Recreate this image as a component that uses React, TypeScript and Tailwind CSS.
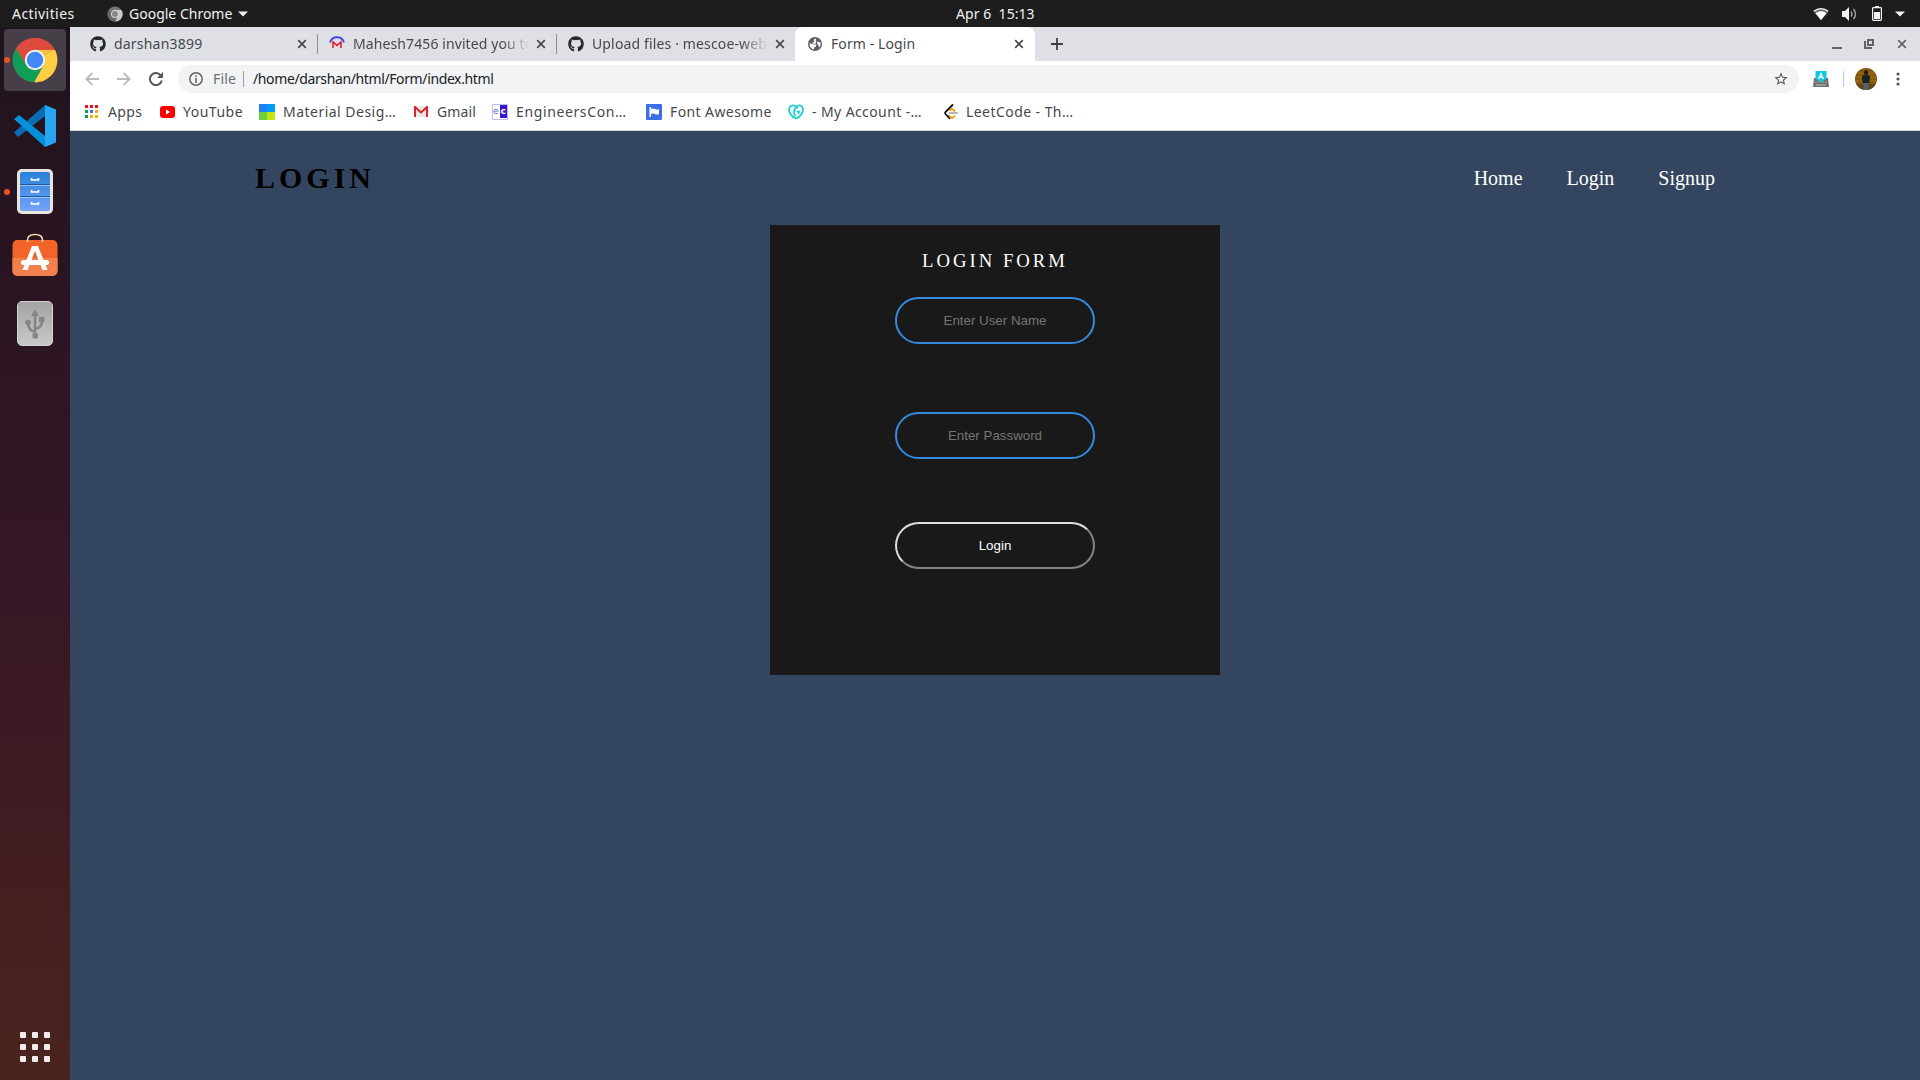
import React from "react";
import { FaGithub } from "react-icons/fa";

const SANS = "font-['Noto_Sans',sans-serif]";

function Label({ w, t, c = "" }: { w: string; t: string; c?: string }) {
  return <span className={`block shrink-0 whitespace-nowrap ${w} ${c}`}>{t}</span>;
}

function Caret() {
  return (
    <svg width="10" height="6" viewBox="0 0 10 6">
      <path d="M0 .5h10L5 5.5z" fill="#f2f2f2" />
    </svg>
  );
}

function TopBar() {
  return (
    <header className="flex h-[27px] shrink-0 items-center bg-[#1d1d1d] text-[14px] text-[#f2f2f2]">
      <div className="flex w-[956px] items-center pl-3">
        <Label w="w-[95px]" t="Activities" c="pb-px tracking-[0.43px]" />
        <svg width="16" height="16" viewBox="0 0 16 16" className="mr-[6px]">
          <circle cx="8" cy="8" r="7.500" fill="#777" />
          <path d="M8 4h6.500a7.500 7.500 0 0 1-6.500 11.500l3.500-6z" fill="#c9c9c9" />
          <path d="M1.500 4.200A7.500 7.500 0 0 0 8 15.500l3-6z" fill="#686868" />
          <circle cx="8" cy="8" r="4" fill="#d8d8d8" />
          <circle cx="8" cy="8" r="3" fill="#888" />
        </svg>
        <Label w="w-[109px]" t="Google Chrome" c="pb-px" />
        <Caret />
      </div>
      <Label w="w-[82px]" t="Apr 6  15:13" c="whitespace-pre pb-px tracking-[0.05px]" />
      <div className="flex flex-1 items-center justify-end pr-[15px]">
        <svg width="16" height="14" viewBox="0 0 16 14" className="mr-[13px]">
          <path d="M.5 4.5C5 .5 11 .5 15.500 4.500L8 13.500z" fill="#6d6d6d" />
          <path d="M.8 4.300C5 .6 11 .6 15.200 4.300" fill="none" stroke="#f4f4f4" strokeWidth="1.300" />
          <path d="M2.600 6.200C6 3.600 10 3.600 13.400 6.200L8 13z" fill="#fff" />
        </svg>
        <svg width="15" height="14" viewBox="0 0 15 14" className="mr-[15px]">
          <path d="M0 4h3l4-4v14l-4-4H0z" fill="#f2f2f2" />
          <path d="M9 4.500q2 2.500 0 5M11.500 2q4 5 0 10" fill="none" stroke="#aaa" strokeWidth="1.300" />
        </svg>
        <svg width="10" height="15" viewBox="0 0 10 15" className="mr-[13px]">
          <path d="M3 0h4v2H3z" fill="#f2f2f2" />
          <rect x=".6" y="1.600" width="8.800" height="12.800" rx=".8" fill="none" stroke="#f2f2f2" strokeWidth="1.200" />
          <path d="M2 6h6v7H2z" fill="#f2f2f2" />
        </svg>
        <Caret />
      </div>
    </header>
  );
}

function ChromeIcon() {
  return (
    <svg width="46" height="46" viewBox="0 0 46 46">
      <circle cx="23" cy="23" r="22.300" fill="#dd4b3e" />
      <path d="M23 13h20A22.300 22.300 0 0 1 22 45.300L31.700 28z" fill="#ffce43" />
      <path d="M4 11.500A22.300 22.300 0 0 0 22 45.300L31.700 28 14.300 28z" fill="#109d58" />
      <path d="M23 13h20l-11 6z" fill="#e8b83a" opacity=".6" />
      <circle cx="23" cy="23" r="10.200" fill="#f1f1f1" />
      <circle cx="23" cy="23" r="8.200" fill="#4387f4" />
    </svg>
  );
}

function CodeIcon() {
  return (
    <svg width="42" height="42" viewBox="0 0 42 42">
      <path d="M0 27.500L4 32l27-21V0z" fill="#0a6db3" />
      <path d="M0 14l5-4 26 21v11z" fill="#0590da" />
      <path d="M31 0l11 4.500v33L31 42z" fill="#27a5f2" />
    </svg>
  );
}

function FilesIcon() {
  return (
    <svg width="38" height="46" viewBox="0 0 38 46">
      <defs>
        <linearGradient id="drawer" x1="0" y1="0" x2="0" y2="1">
          <stop offset="0" stopColor="#2a81d8" />
          <stop offset="1" stopColor="#75a2fa" />
        </linearGradient>
      </defs>
      <rect x="1" y="0" width="36" height="45" rx="5" fill="#e9e5dc" />
      <rect x="4" y="3" width="30" height="39" rx="2" fill="url(#drawer)" />
      <path d="M4 15.500h30M4 27.500h30" stroke="#155ca5" />
      <path d="M4 16.500h30M4 28.500h30" stroke="#9cc4f5" />
      <path d="M15.500 9v2h7V9M15.500 21v2h7v-2M15.500 33v2h7v-2" fill="none" stroke="#fff" strokeWidth="1.600" />
    </svg>
  );
}

function SoftwareIcon() {
  return (
    <svg width="46" height="44" viewBox="0 0 46 44" className="mb-[6px]">
      <rect x=".5" y="7" width="45" height="36" rx="5" fill="#f26427" />
      <path d="M.5 25h45v13a5 5 0 0 1-5 5h-35a5 5 0 0 1-5-5z" fill="#f2804e" />
      <path d="M15.500 9V7q0-5.500 7.500-5.500T30.500 7v2" fill="none" stroke="#f6d6a8" strokeWidth="1.600" />
      <path d="M20 13h6l9.500 24h-5L23 18l-7.500 19h-5z" fill="#fff" />
      <rect x="9" y="27" width="28" height="5" rx="2.500" fill="#fff" />
    </svg>
  );
}

function UsbIcon() {
  return (
    <svg width="38" height="46" viewBox="0 0 38 46">
      <defs>
        <linearGradient id="metal" x1="0" y1="0" x2="0" y2="1">
          <stop offset="0" stopColor="#a3a3a3" />
          <stop offset="1" stopColor="#c9c9c9" />
        </linearGradient>
      </defs>
      <rect x="1.500" y=".5" width="35" height="44" rx="4.500" fill="url(#metal)" stroke="#d2d2d2" />
      <g fill="none" stroke="#858585" strokeWidth="2.500">
        <path d="M19 35V12M19 31q-7-2-7-9M19 28q7-1 7-8" />
      </g>
      <g fill="#858585">
        <path d="M15 15l4-7 4 7zM23 16h5.500v5H23z" />
        <circle cx="12" cy="21.500" r="2.800" />
        <rect x="16.500" y="32" width="5.500" height="5.500" rx="1.500" />
      </g>
    </svg>
  );
}

function DockItem({ children, active, dot }: { children: React.ReactNode; active?: boolean; dot?: boolean }) {
  return (
    <div className={`relative flex h-[62px] w-[62px] items-center justify-center rounded-[4px] ${active ? "bg-[#463f47]" : ""}`}>
      {dot && <i className="absolute top-[28px] left-0 h-[6px] w-[6px] rounded-full bg-[#e95420]" />}
      {children}
    </div>
  );
}

function Dock() {
  return (
    <aside className="flex w-[70px] shrink-0 flex-col items-center justify-between bg-linear-to-b from-[#1f131d] via-[#351626] to-[#4a231c] pt-[2px] pb-[18px]">
      <div className="flex flex-col items-center gap-[4px]">
        <DockItem active dot><ChromeIcon /></DockItem>
        <DockItem><CodeIcon /></DockItem>
        <DockItem dot><FilesIcon /></DockItem>
        <DockItem><SoftwareIcon /></DockItem>
        <DockItem><UsbIcon /></DockItem>
      </div>
      <div className="grid grid-cols-3 gap-[6px]">
        {Array.from({ length: 9 }, (_, i) => (
          <i key={i} className="h-[6px] w-[6px] rounded-[1px] bg-[#f0eeec]" />
        ))}
      </div>
    </aside>
  );
}

function Cross({ c = "#45494d" }: { c?: string }) {
  return (
    <svg width="10" height="10" viewBox="0 0 10 10" className="shrink-0">
      <path d="M1.200 1.200l7.600 7.600M8.800 1.200L1.200 8.800" stroke={c} strokeWidth="1.700" />
    </svg>
  );
}

function MercuryIcon() {
  return (
    <svg width="16" height="16" viewBox="0 0 16 16" className="shrink-0">
      <path d="M1 6.500C3 -.5 13 -.5 15 6.500" fill="none" stroke="#4646e8" strokeWidth="1.800" />
      <path d="M4 12V6l4 3.500L12 6v6" fill="none" stroke="#e0182d" strokeWidth="1.500" />
    </svg>
  );
}

function GlobeIcon() {
  return (
    <svg width="14" height="14" viewBox="0 0 14 14" className="shrink-0">
      <circle cx="7" cy="7" r="7" fill="#5a5d63" />
      <path d="M8 2.200C6 2.500 6 4 7.500 4.300L7 6H4.500" fill="none" stroke="#fff" strokeWidth="1.500" />
      <path d="M1.500 6.200L5 7.200 8.300 7.600 8 9.500 6 10.500v2.200A5.800 5.800 0 0 1 1.500 6.200zM9.500 4.500l3 1q.6 3-1.300 5.200Q10.500 8 9 6.500z" fill="#fff" />
    </svg>
  );
}

const FADE = "overflow-hidden mask-r-from-85% mask-r-to-100%";

function TabStrip() {
  return (
    <div className="flex h-[34px] shrink-0 items-center bg-[#dee0e5] text-[14px] text-[#45494d]">
      <div className="flex h-full w-[247px] items-center pl-5">
        <FaGithub size={16} color="#24292e" className="mr-[8px]" />
        <Label w="w-[183px]" t="darshan3899" c="pb-[2px] tracking-[0.2px]" />
        <Cross />
      </div>
      <i className="h-5 w-px bg-[#8b8e93]" />
      <div className="flex h-full w-[238px] items-center pl-[11px]">
        <MercuryIcon />
        <Label w="w-[176px]" t="Mahesh7456 invited you to" c={`ml-2 mr-[7px] pb-[2px] tracking-[0.1px] ${FADE}`} />
        <Cross />
      </div>
      <i className="h-5 w-px bg-[#8b8e93]" />
      <div className="flex h-full w-[238px] items-center pl-[11px]">
        <FaGithub size={16} color="#24292e" />
        <Label w="w-[176px]" t="Upload files · mescoe-web" c={`ml-2 mr-[7px] pb-[2px] tracking-[0.14px] ${FADE}`} />
        <Cross />
      </div>
      <div className="flex h-full w-[240px] items-center rounded-t-[8px] bg-white pl-[13px]">
        <GlobeIcon />
        <Label w="w-[183px]" t="Form - Login" c="ml-[9px] pb-[2px] tracking-[0.1px]" />
        <Cross />
      </div>
      <div className="flex h-full flex-1 items-center rounded-bl-[8px] bg-[#dee0e5] pl-4">
        <svg width="12" height="12" viewBox="0 0 12 12">
          <path d="M6 0v12M0 6h12" stroke="#3c4043" strokeWidth="1.800" />
        </svg>
      </div>
      <div className="flex items-center pr-[13px]">
        <svg width="10" height="10" className="mr-[22px]"><path d="M0 8h10v2H0z" fill="#5f6368" /></svg>
        <svg width="10" height="10" viewBox="0 0 10 10" fill="none" stroke="#5f6368" strokeWidth="2" className="mr-[23px]">
          <path d="M4 1h5v5H4zM1 2v7h7" />
        </svg>
        <Cross c="#5f6368" />
      </div>
    </div>
  );
}

function Toolbar() {
  return (
    <div className="flex h-[36px] shrink-0 items-center bg-white pl-[15px] text-[14px]">
      <svg width="14" height="14" viewBox="0 0 14 14" className="mr-[18px]" fill="none" stroke="#b9bbbe" strokeWidth="1.800">
        <path d="M14 7H1.500M7.500 .8L1.300 7l6.200 6.200" />
      </svg>
      <svg width="14" height="14" viewBox="0 0 14 14" className="mr-[18px]" fill="none" stroke="#b9bbbe" strokeWidth="1.800">
        <path d="M0 7h12.500M6.500 .8L12.700 7l-6.200 6.200" />
      </svg>
      <svg width="14" height="14" viewBox="0 0 14 14" className="mr-[15px]">
        <path d="M12 3.800A6 6 0 1 0 12.800 8.500" fill="none" stroke="#54575c" strokeWidth="2" />
        <path d="M14 0v6H8z" fill="#54575c" />
      </svg>
      <div className="flex h-[28px] w-[1621px] items-center rounded-full bg-[#f1f3f4] pl-[11px]">
        <svg width="14" height="14" viewBox="0 0 14 14" className="mr-[10px]">
          <circle cx="7" cy="7" r="6.200" fill="none" stroke="#5f6368" strokeWidth="1.500" />
          <path d="M6.200 3.200h1.600v1.600H6.200zM6.200 6h1.600v5H6.200z" fill="#5f6368" />
        </svg>
        <Label w="w-[30px]" t="File" c="pb-[2px] text-[#6b6f74] tracking-[0.2px]" />
        <i className="mr-[9px] h-4 w-px bg-[#9a9da1]" />
        <Label w="w-[1500px]" t="/home/darshan/html/Form/index.html" c="pb-[2px] text-[#202124] tracking-[-0.38px]" />
        <svg width="16" height="16" viewBox="0 0 24 24" className="ml-[20px] shrink-0" fill="#54575c">
          <path d="M22 9.240l-7.190-.62L12 2 9.190 8.630 2 9.240l5.460 4.730L5.820 21 12 17.270 18.180 21l-1.630-7.030L22 9.240zM12 15.400l-3.760 2.270 1-4.280-3.320-2.880 4.380-.38L12 6.100l1.710 4.040 4.380.38-3.320 2.880 1 4.280L12 15.400z" />
        </svg>
      </div>
      <svg width="16" height="16" viewBox="0 0 16 16" className="ml-[14px]">
        <path d="M1 7h14l1 9H0z" fill="#707070" />
        <path d="M2 11h12" stroke="#aaa" strokeWidth="1.200" strokeDasharray="1.500 1" />
        <path d="M3 14h10" stroke="#aaa" strokeWidth="1.400" />
        <path d="M2.500 0h11v7.500L8 11.500 2.500 7.500z" fill="#11c8e4" />
        <path d="M5.500 8L8 2.500 10.500 8M6.500 6.200h3" fill="none" stroke="#fff" strokeWidth="1.300" />
      </svg>
      <i className="ml-[14px] h-4 w-px bg-[#c6c8cb]" />
      <svg width="22" height="22" viewBox="0 0 22 22" className="ml-[11px] rounded-full">
        <path d="M0 0h22v22H0z" fill="#85580f" />
        <path d="M0 5h22M0 9h22M0 13h22" stroke="#a57018" />
        <path d="M0 16h22v6H0z" fill="#60481c" />
        <path d="M7 8q4-2.500 8 0l-.5 7h-7z" fill="#16231f" />
        <circle cx="11" cy="4.500" r="2.300" fill="#241a14" />
        <path d="M8.500 15h5v7h-5z" fill="#56606d" />
      </svg>
      <svg width="4" height="14" viewBox="0 0 4 14" className="ml-[19px]" fill="#54575c">
        <circle cx="2" cy="2" r="1.600" /><circle cx="2" cy="7" r="1.600" /><circle cx="2" cy="12" r="1.600" />
      </svg>
    </div>
  );
}

function Bookmarks() {
  return (
    <nav className="flex h-[34px] shrink-0 items-center border-b border-[#d4d7dc] bg-white pb-[4px] pl-[15px] text-[14px] text-[#45494d]">
      <svg width="13" height="13" viewBox="0 0 13 13" className="mr-[10px]">
        <path d="M0 0h3v3H0zM5 0h3v3H5zM10 0h3v3h-3z" fill="#f00b1d" />
        <path d="M0 5h3v3H0zM0 10h3v3H0z" fill="#0aa14e" />
        <path d="M5 5h3v3H5z" fill="#3c72f5" />
        <path d="M10 5h3v3h-3zM5 10h3v3H5zM10 10h3v3h-3z" fill="#f7b100" />
      </svg>
      <Label w="w-[52px]" t="Apps" c="tracking-[0.4px]" />
      <svg width="15" height="12" viewBox="0 0 15 12" className="mr-2">
        <rect width="15" height="12" rx="3" fill="#f00" />
        <path d="M6 3.500v5L10 6z" fill="#fff" />
      </svg>
      <Label w="w-[76px]" t="YouTube" c="tracking-[0.5px]" />
      <svg width="16" height="16" viewBox="0 0 16 16" className="mr-2">
        <path d="M0 0h8v8H0z" fill="#2180f3" /><path d="M8 0h8v8H8z" fill="#049cf8" />
        <path d="M0 8h8v8H0z" fill="#6bd13f" /><path d="M8 8h8v8H8z" fill="#c3e80f" />
      </svg>
      <Label w="w-[131px]" t="Material Desig…" c="tracking-[0.48px]" />
      <svg width="14" height="11" viewBox="0 0 14 11" className="mr-[9px]">
        <path d="M0 0h14v11H0z" fill="#e8e6e6" />
        <path d="M1 11V1l6 5.500L13 1v10" fill="none" stroke="#d8242c" strokeWidth="2" />
      </svg>
      <Label w="w-[55px]" t="Gmail" c="tracking-[0.1px]" />
      <span className="mr-2 flex h-4 w-4 items-center border border-[#b8c1ee] font-['DejaVu_Sans'] text-[9px] leading-none text-[#5161c9]">
        e<b className="ml-px flex h-[13px] w-[9px] items-center justify-center bg-[#3d14c8] text-[9px] text-white">c</b>
      </span>
      <Label w="w-[130px]" t="EngineersCon…" c="tracking-[0.62px]" />
      <svg width="16" height="16" viewBox="0 0 16 16" className="mr-2">
        <rect width="16" height="16" rx="1" fill="#3a6fe8" />
        <path d="M4.200 3v10" stroke="#fff" strokeWidth="1.500" />
        <path d="M5 5q2-1 4 0t4 0v5q-2 1-4 0t-4 0z" fill="#fff" />
      </svg>
      <Label w="w-[118px]" t="Font Awesome" c="tracking-[0.4px]" />
      <svg width="16" height="16" viewBox="0 0 16 16" className="mr-[8px]" fill="none" stroke="#16cdd0" strokeWidth="1.700">
        <path d="M8 14.500C3 13 0 7 1.500 3.500S7 1 10 4M8 14.500c5-1.500 8-7.500 6.500-11S9 1 7 5s-.5 6 .5 7M8.500 7.500h2.500c0 1-.5 2-1 2.500" />
      </svg>
      <Label w="w-[132px]" t="- My Account -…" c="tracking-[0.4px]" />
      <svg width="14" height="16" viewBox="0 0 14 16" className="mr-[8px]" fill="none" strokeWidth="1.800" strokeLinecap="round">
        <path d="M5 11.500l1.500 1.700q1.500 1.500 3 0l1-1M6 6q2-1.500 3.500 0l1 1" stroke="#f5a10a" />
        <path d="M8.500 1L1.500 8q-.8 1 0 2l4 4.300" stroke="#111" />
        <path d="M5.500 9h7.500" stroke="#b5b5b5" />
      </svg>
      <Label w="w-[120px]" t="LeetCode - Th…" c="tracking-[0.44px]" />
    </nav>
  );
}

function LoginPage() {
  return (
    <main className="flex flex-1 flex-col items-center bg-[#34465f] font-['Liberation_Serif',serif]">
      <div className="flex h-[94px] w-full items-center justify-between pr-[205px] pl-[185px]">
        <h1 className="pb-[2px] text-[30px] font-bold tracking-[4px] text-black">LOGIN</h1>
        <nav className="flex gap-[44px] text-[20px] text-white">
          <a>Home</a>
          <a>Login</a>
          <a>Signup</a>
        </nav>
      </div>
      <form className="flex h-[450px] w-[450px] flex-col items-center bg-[#191919]">
        <h3 className="mt-[25px] h-[47px] text-[18.720px] leading-[22px] tracking-[3px] text-white">LOGIN FORM</h3>
        <input className="h-[47px] w-[200px] rounded-[24px] border-2 border-[#348be0] text-center font-['Liberation_Sans',sans-serif] text-[13.333px] placeholder:text-[#757575]" placeholder="Enter User Name" />
        <input className="mt-[68px] h-[47px] w-[200px] rounded-[24px] border-2 border-[#348be0] text-center font-['Liberation_Sans',sans-serif] text-[13.333px] placeholder:text-[#757575]" placeholder="Enter Password" />
        <button type="button" className="mt-[63px] h-[47px] w-[200px] rounded-[24px] border-2 border-t-[#dedede] border-r-[#858585] border-b-[#858585] border-l-[#dedede] font-['Liberation_Sans',sans-serif] text-[13.333px] text-white">Login</button>
      </form>
    </main>
  );
}

export default function App() {
  return (
    <div className={`flex h-[1080px] w-[1920px] flex-col overflow-hidden ${SANS}`}>
      <TopBar />
      <div className="flex min-h-0 flex-1">
        <Dock />
        <div className="flex min-w-0 flex-1 flex-col bg-white">
          <TabStrip />
          <Toolbar />
          <Bookmarks />
          <LoginPage />
        </div>
      </div>
    </div>
  );
}
